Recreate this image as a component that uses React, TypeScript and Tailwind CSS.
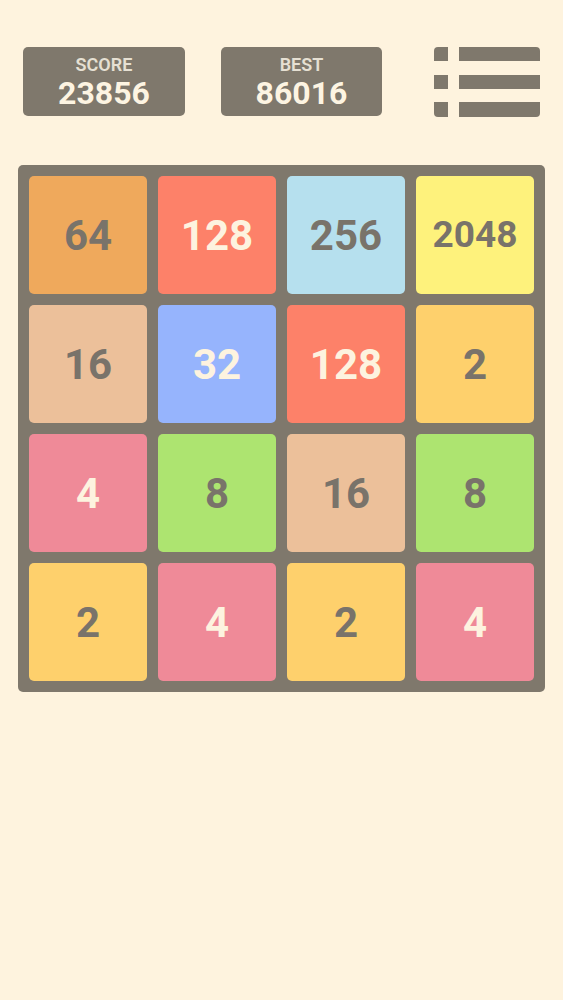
import React from 'react'

type Tile = { value: number; bg: string; text: string; size: string }

const dark = 'text-[#79736a]'
const light = 'text-[#fdf3df]'

const tiles: Tile[] = [
  { value: 64, bg: 'bg-[#efa95c]', text: dark, size: 'text-[42px]' },
  { value: 128, bg: 'bg-[#fd8169]', text: light, size: 'text-[42px]' },
  { value: 256, bg: 'bg-[#b6e0ee]', text: dark, size: 'text-[42px]' },
  { value: 2048, bg: 'bg-[#fef27c]', text: dark, size: 'text-[37px]' },
  { value: 16, bg: 'bg-[#ecc09a]', text: dark, size: 'text-[42px]' },
  { value: 32, bg: 'bg-[#96b4fd]', text: light, size: 'text-[42px]' },
  { value: 128, bg: 'bg-[#fd8169]', text: light, size: 'text-[42px]' },
  { value: 2, bg: 'bg-[#fed06c]', text: dark, size: 'text-[42px]' },
  { value: 4, bg: 'bg-[#ef8a98]', text: light, size: 'text-[42px]' },
  { value: 8, bg: 'bg-[#ade470]', text: dark, size: 'text-[42px]' },
  { value: 16, bg: 'bg-[#ecc09a]', text: dark, size: 'text-[42px]' },
  { value: 8, bg: 'bg-[#ade470]', text: dark, size: 'text-[42px]' },
  { value: 2, bg: 'bg-[#fed06c]', text: dark, size: 'text-[42px]' },
  { value: 4, bg: 'bg-[#ef8a98]', text: light, size: 'text-[42px]' },
  { value: 2, bg: 'bg-[#fed06c]', text: dark, size: 'text-[42px]' },
  { value: 4, bg: 'bg-[#ef8a98]', text: light, size: 'text-[42px]' },
]

function ScoreBox({ label, value, width }: { label: string; value: string; width: string }) {
  return (
    <div className={`${width} h-[69px] rounded-[5px] bg-[#7f786c] flex flex-col items-center pt-[9px]`}>
      <span className="text-[18px] leading-[18px] font-semibold text-[#e6e0d3]">{label}</span>
      <span className="mt-[4px] text-[32px] leading-[30px] font-bold text-[#fdf4e2]">{value}</span>
    </div>
  )
}

function MenuIcon() {
  return (
    <div className="w-[106px] h-[70px] flex flex-col justify-between">
      {/* three rows: square + bar, outer corners rounded */}
      <div className="flex gap-[11px] h-[14px]">
        <div className="w-[14px] bg-[#7f786c] rounded-tl-[4px]" />
        <div className="flex-1 bg-[#7f786c] rounded-tr-[4px]" />
      </div>
      <div className="flex gap-[11px] h-[14px]">
        <div className="w-[14px] bg-[#7f786c]" />
        <div className="flex-1 bg-[#7f786c]" />
      </div>
      <div className="flex gap-[11px] h-[15px]">
        <div className="w-[14px] bg-[#7f786c] rounded-bl-[4px]" />
        <div className="flex-1 bg-[#7f786c] rounded-br-[4px]" />
      </div>
    </div>
  )
}

export default function App() {
  return (
    <div
      className="w-[563px] h-[1000px] bg-[#fef3de] overflow-hidden"
      style={{ fontFamily: 'Roboto, "Noto Sans", sans-serif' }}
    >
      {/* Header */}
      <div className="flex items-start pt-[47px] pl-[23px]">
        <ScoreBox label="SCORE" value="23856" width="w-[162px]" />
        <div className="w-[36px]" />
        <ScoreBox label="BEST" value="86016" width="w-[161px]" />
        <div className="w-[52px]" />
        <MenuIcon />
      </div>

      {/* Board */}
      <div className="mt-[48px] ml-[18px] w-[527px] h-[527px] rounded-[5px] bg-[#7f786c] p-[11px]">
        <div className="grid grid-cols-4 gap-[11px]">
          {tiles.map((t, i) => (
            <div
              key={i}
              className={`h-[118px] rounded-[5px] flex items-center justify-center font-bold ${t.bg} ${t.text} ${t.size}`}
            >
              {t.value}
            </div>
          ))}
        </div>
      </div>
    </div>
  )
}
